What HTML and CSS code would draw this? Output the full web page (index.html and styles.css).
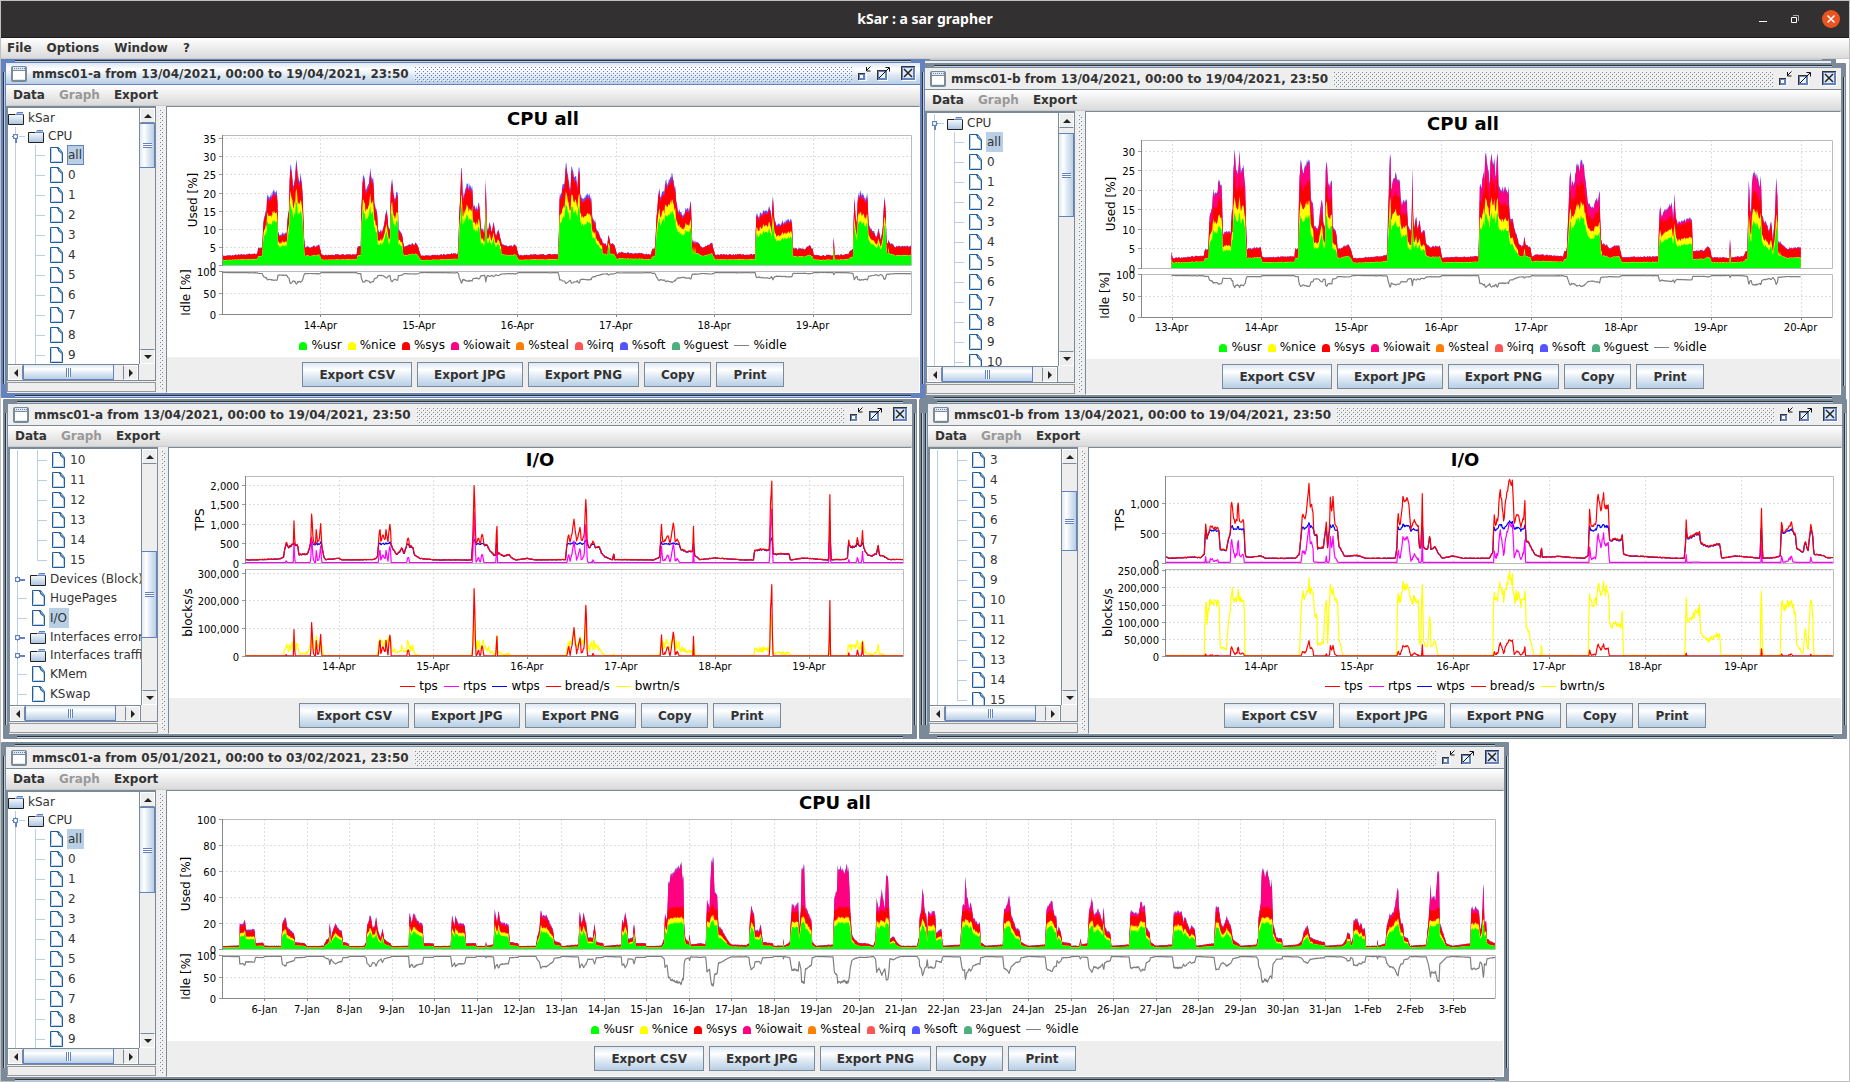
FILE: index.html
```html
<!DOCTYPE html>
<html lang="en">
<head>
<meta charset="utf-8">
<title>kSar : a sar grapher</title>
<link rel="stylesheet" href="styles.css">
<script src="app.js" defer></script>
</head>
<body>
<svg class="defs" aria-hidden="true">
  <defs>
    <linearGradient id="steel" x1="0" y1="0" x2="0" y2="1"><stop offset="0" stop-color="#fff"/><stop offset="1" stop-color="#a9c3df"/></linearGradient>
    <symbol id="folder" viewBox="0 0 16 14"><path d="M9 1h6v2H8z" fill="#6382bf"/><path d="M.5 3.5h7l1-1h7v11H.5z" fill="url(#steel)"/><path d="M.5 13.5V3.5h7M15.5 3v10.5H.5" fill="none" stroke="#222"/><path d="M8 3.5h8" stroke="#6382bf"/></symbol>
    <symbol id="doc" viewBox="0 0 16 16"><path d="M2.5.5h8l4 5v10h-12z" fill="#fff" stroke="#1f5c99"/><path d="M3.5 14.5h10V6" fill="none" stroke="#b8cfe5"/><path d="M3.5 1.5v12" stroke="#b8cfe5"/><path d="M8.5.5l6 6.5M10.5 1v3l3 2" fill="none" stroke="#2f6ba8"/></symbol>
    <symbol id="frame" viewBox="0 0 16 16"><rect x="1" y="1" width="14" height="14" rx="1" fill="#fff" stroke="#7a8a99" stroke-width="2"/><rect x="2" y="1" width="12" height="3" fill="#dde8f3"/><path d="M3 2.5h11" stroke="#6382bf" stroke-dasharray="1 1"/><path d="M2 4.5h12" stroke="#7a8a99"/><path d="M3 13.5h11" stroke="#dde8f3"/></symbol>
    <symbol id="min" viewBox="0 0 15 15"><path d="M2 14.5h7.500V8" fill="none" stroke="#fff"/><rect x="1" y="7" width="7" height="7" fill="#333"/><rect x="2" y="8" width="6" height="6" fill="#6382bf"/><rect x="3" y="9" width="3" height="3" fill="#fff"/><path d="M13.5.5l-4 4M9.500 1v4h4" fill="none" stroke="#111"/></symbol>
    <symbol id="max" viewBox="0 0 15 15"><path d="M2 14.5h9.500V6" fill="none" stroke="#fff"/><rect x="1" y="4" width="10" height="10" fill="#333"/><rect x="2" y="5" width="9" height="9" fill="#6382bf"/><rect x="3" y="6" width="6" height="6" fill="#eef3fa"/><path d="M3 12l10-10M9.500 1.500h4v4" fill="none" stroke="#111"/></symbol>
    <symbol id="close" viewBox="0 0 15 15"><path d="M1 14.5h13.5V1" fill="none" stroke="#fff"/><rect width="14" height="14" fill="#333"/><rect x="1" y="1" width="13" height="13" fill="#6382bf"/><rect x="2" y="2" width="10" height="10" fill="#dde8f3"/><path d="M3 3l8 8M11 3l-8 8" stroke="#222" stroke-width="1.500"/></symbol>
  </defs>
</svg>

<div class="app">
  <header class="app-title">
    <span></span>
    <h1>kSar : a sar grapher</h1>
    <div class="app-controls">
      <button aria-label="Minimize"><svg width="10" height="10"><path d="M1 7.500h8" stroke="#fff"/></svg></button>
      <button aria-label="Restore"><svg width="10" height="10"><path d="M1.500 3.500h5v5h-5z" fill="none" stroke="#fff"/><path d="M3 1.500h5.500V7" fill="none" stroke="#aaa"/></svg></button>
      <button class="quit" aria-label="Close"><svg width="18" height="18"><path d="M5.500 5.500l7 7M12.500 5.500l-7 7" stroke="#fff" stroke-width="1.500"/></svg></button>
    </div>
  </header>
  <nav class="menubar app-menu"><button>File</button><button>Options</button><button>Window</button><button>?</button></nav>

  <main class="desktop">
    <div class="window back-top"></div>
    <div class="window back-mid"></div>

    <section class="window w-cpu-b">
      <header class="titlebar"><svg class="ic"><use href="#frame"/></svg><h2>mmsc01-b from 13/04/2021, 00:00 to 19/04/2021, 23:50</h2><span class="bumps"></span><button aria-label="Iconify"><svg><use href="#min"/></svg></button><button aria-label="Maximize"><svg><use href="#max"/></svg></button><button class="shut" aria-label="Close"><svg><use href="#close"/></svg></button></header>
      <nav class="menubar"><button>Data</button><button disabled>Graph</button><button>Export</button></nav>
      <div class="split">
        <aside class="side">
          <div class="scrollpane">
            <ul class="tree">
              <li class="n1 open"><svg class="ic"><use href="#folder"/></svg><span>CPU</span></li>
              <li class="n2"><svg class="ic"><use href="#doc"/></svg><span class="sel">all</span></li>
              <li class="n2"><svg class="ic"><use href="#doc"/></svg><span>0</span></li>
              <li class="n2"><svg class="ic"><use href="#doc"/></svg><span>1</span></li>
              <li class="n2"><svg class="ic"><use href="#doc"/></svg><span>2</span></li>
              <li class="n2"><svg class="ic"><use href="#doc"/></svg><span>3</span></li>
              <li class="n2"><svg class="ic"><use href="#doc"/></svg><span>4</span></li>
              <li class="n2"><svg class="ic"><use href="#doc"/></svg><span>5</span></li>
              <li class="n2"><svg class="ic"><use href="#doc"/></svg><span>6</span></li>
              <li class="n2"><svg class="ic"><use href="#doc"/></svg><span>7</span></li>
              <li class="n2"><svg class="ic"><use href="#doc"/></svg><span>8</span></li>
              <li class="n2"><svg class="ic"><use href="#doc"/></svg><span>9</span></li>
              <li class="n2"><svg class="ic"><use href="#doc"/></svg><span>10</span></li>
            </ul>
            <div class="vbar"><button class="up" aria-label="Scroll up"></button><div class="track"><i class="thumb" style="margin-top:5px;height:84px"></i></div><button class="down" aria-label="Scroll down"></button></div>
            <div class="hbar"><button class="left" aria-label="Scroll left"></button><div class="track"><i class="thumb"></i></div><button class="right" aria-label="Scroll right"></button></div>
          </div>
          <div class="status"></div>
        </aside>
        <div class="divider"></div>
        <div class="report">
          <h3>CPU all</h3>
          <div class="plot" data-chart="cpuB"></div>
          <ul class="legend"><li class="usr">%usr</li><li class="nice">%nice</li><li class="sys">%sys</li><li class="iowait">%iowait</li><li class="steal">%steal</li><li class="irq">%irq</li><li class="soft">%soft</li><li class="guest">%guest</li><li class="line idle">%idle</li></ul>
          <div class="actions"><button>Export CSV</button><button>Export JPG</button><button>Export PNG</button><button>Copy</button><button>Print</button></div>
        </div>
      </div>
    </section>

    <section class="window w-io-a">
      <header class="titlebar"><svg class="ic"><use href="#frame"/></svg><h2>mmsc01-a from 13/04/2021, 00:00 to 19/04/2021, 23:50</h2><span class="bumps"></span><button aria-label="Iconify"><svg><use href="#min"/></svg></button><button aria-label="Maximize"><svg><use href="#max"/></svg></button><button class="shut" aria-label="Close"><svg><use href="#close"/></svg></button></header>
      <nav class="menubar"><button>Data</button><button disabled>Graph</button><button>Export</button></nav>
      <div class="split">
        <aside class="side">
          <div class="scrollpane">
            <ul class="tree">
              <li class="n2"><svg class="ic"><use href="#doc"/></svg><span>10</span></li>
              <li class="n2"><svg class="ic"><use href="#doc"/></svg><span>11</span></li>
              <li class="n2"><svg class="ic"><use href="#doc"/></svg><span>12</span></li>
              <li class="n2"><svg class="ic"><use href="#doc"/></svg><span>13</span></li>
              <li class="n2"><svg class="ic"><use href="#doc"/></svg><span>14</span></li>
              <li class="n2 last"><svg class="ic"><use href="#doc"/></svg><span>15</span></li>
              <li class="n1 closed"><svg class="ic"><use href="#folder"/></svg><span>Devices (Block)</span></li>
              <li class="n1 leaf"><svg class="ic"><use href="#doc"/></svg><span>HugePages</span></li>
              <li class="n1 leaf"><svg class="ic"><use href="#doc"/></svg><span class="sel">I/O</span></li>
              <li class="n1 closed"><svg class="ic"><use href="#folder"/></svg><span>Interfaces errors</span></li>
              <li class="n1 closed"><svg class="ic"><use href="#folder"/></svg><span>Interfaces traffic</span></li>
              <li class="n1 leaf"><svg class="ic"><use href="#doc"/></svg><span>KMem</span></li>
              <li class="n1 leaf"><svg class="ic"><use href="#doc"/></svg><span>KSwap</span></li>
              <li class="n1 leaf"><svg class="ic"><use href="#doc"/></svg><span></span></li>
            </ul>
            <div class="vbar"><button class="up" aria-label="Scroll up"></button><div class="track"><i class="thumb" style="margin-top:87px;height:87px"></i></div><button class="down" aria-label="Scroll down"></button></div>
            <div class="hbar"><button class="left" aria-label="Scroll left"></button><div class="track"><i class="thumb"></i></div><button class="right" aria-label="Scroll right"></button></div>
          </div>
          <div class="status"></div>
        </aside>
        <div class="divider"></div>
        <div class="report">
          <h3>I/O</h3>
          <div class="plot" data-chart="ioA"></div>
          <ul class="legend"><li class="line tps">tps</li><li class="line rtps">rtps</li><li class="line wtps">wtps</li><li class="line tps">bread/s</li><li class="line bwrtn">bwrtn/s</li></ul>
          <div class="actions"><button>Export CSV</button><button>Export JPG</button><button>Export PNG</button><button>Copy</button><button>Print</button></div>
        </div>
      </div>
    </section>

    <section class="window w-io-b">
      <header class="titlebar"><svg class="ic"><use href="#frame"/></svg><h2>mmsc01-b from 13/04/2021, 00:00 to 19/04/2021, 23:50</h2><span class="bumps"></span><button aria-label="Iconify"><svg><use href="#min"/></svg></button><button aria-label="Maximize"><svg><use href="#max"/></svg></button><button class="shut" aria-label="Close"><svg><use href="#close"/></svg></button></header>
      <nav class="menubar"><button>Data</button><button disabled>Graph</button><button>Export</button></nav>
      <div class="split">
        <aside class="side">
          <div class="scrollpane">
            <ul class="tree">
              <li class="n2"><svg class="ic"><use href="#doc"/></svg><span>3</span></li>
              <li class="n2"><svg class="ic"><use href="#doc"/></svg><span>4</span></li>
              <li class="n2"><svg class="ic"><use href="#doc"/></svg><span>5</span></li>
              <li class="n2"><svg class="ic"><use href="#doc"/></svg><span>6</span></li>
              <li class="n2"><svg class="ic"><use href="#doc"/></svg><span>7</span></li>
              <li class="n2"><svg class="ic"><use href="#doc"/></svg><span>8</span></li>
              <li class="n2"><svg class="ic"><use href="#doc"/></svg><span>9</span></li>
              <li class="n2"><svg class="ic"><use href="#doc"/></svg><span>10</span></li>
              <li class="n2"><svg class="ic"><use href="#doc"/></svg><span>11</span></li>
              <li class="n2"><svg class="ic"><use href="#doc"/></svg><span>12</span></li>
              <li class="n2"><svg class="ic"><use href="#doc"/></svg><span>13</span></li>
              <li class="n2"><svg class="ic"><use href="#doc"/></svg><span>14</span></li>
              <li class="n2 last"><svg class="ic"><use href="#doc"/></svg><span>15</span></li>
            </ul>
            <div class="vbar"><button class="up" aria-label="Scroll up"></button><div class="track"><i class="thumb" style="margin-top:27px;height:60px"></i></div><button class="down" aria-label="Scroll down"></button></div>
            <div class="hbar"><button class="left" aria-label="Scroll left"></button><div class="track"><i class="thumb"></i></div><button class="right" aria-label="Scroll right"></button></div>
          </div>
          <div class="status"></div>
        </aside>
        <div class="divider"></div>
        <div class="report">
          <h3>I/O</h3>
          <div class="plot" data-chart="ioB"></div>
          <ul class="legend"><li class="line tps">tps</li><li class="line rtps">rtps</li><li class="line wtps">wtps</li><li class="line tps">bread/s</li><li class="line bwrtn">bwrtn/s</li></ul>
          <div class="actions"><button>Export CSV</button><button>Export JPG</button><button>Export PNG</button><button>Copy</button><button>Print</button></div>
        </div>
      </div>
    </section>

    <section class="window w-month">
      <header class="titlebar"><svg class="ic"><use href="#frame"/></svg><h2>mmsc01-a from 05/01/2021, 00:00 to 03/02/2021, 23:50</h2><span class="bumps"></span><button aria-label="Iconify"><svg><use href="#min"/></svg></button><button aria-label="Maximize"><svg><use href="#max"/></svg></button><button class="shut" aria-label="Close"><svg><use href="#close"/></svg></button></header>
      <nav class="menubar"><button>Data</button><button disabled>Graph</button><button>Export</button></nav>
      <div class="split">
        <aside class="side">
          <div class="scrollpane">
            <ul class="tree">
              <li class="n0"><svg class="ic"><use href="#folder"/></svg><span>kSar</span></li>
              <li class="n1 open"><svg class="ic"><use href="#folder"/></svg><span>CPU</span></li>
              <li class="n2"><svg class="ic"><use href="#doc"/></svg><span class="sel">all</span></li>
              <li class="n2"><svg class="ic"><use href="#doc"/></svg><span>0</span></li>
              <li class="n2"><svg class="ic"><use href="#doc"/></svg><span>1</span></li>
              <li class="n2"><svg class="ic"><use href="#doc"/></svg><span>2</span></li>
              <li class="n2"><svg class="ic"><use href="#doc"/></svg><span>3</span></li>
              <li class="n2"><svg class="ic"><use href="#doc"/></svg><span>4</span></li>
              <li class="n2"><svg class="ic"><use href="#doc"/></svg><span>5</span></li>
              <li class="n2"><svg class="ic"><use href="#doc"/></svg><span>6</span></li>
              <li class="n2"><svg class="ic"><use href="#doc"/></svg><span>7</span></li>
              <li class="n2"><svg class="ic"><use href="#doc"/></svg><span>8</span></li>
              <li class="n2"><svg class="ic"><use href="#doc"/></svg><span>9</span></li>
            </ul>
            <div class="vbar"><button class="up" aria-label="Scroll up"></button><div class="track"><i class="thumb" style="height:86px"></i></div><button class="down" aria-label="Scroll down"></button></div>
            <div class="hbar"><button class="left" aria-label="Scroll left"></button><div class="track"><i class="thumb"></i></div><button class="right" aria-label="Scroll right"></button></div>
          </div>
          <div class="status"></div>
        </aside>
        <div class="divider"></div>
        <div class="report">
          <h3>CPU all</h3>
          <div class="plot" data-chart="month"></div>
          <ul class="legend"><li class="usr">%usr</li><li class="nice">%nice</li><li class="sys">%sys</li><li class="iowait">%iowait</li><li class="steal">%steal</li><li class="irq">%irq</li><li class="soft">%soft</li><li class="guest">%guest</li><li class="line idle">%idle</li></ul>
          <div class="actions"><button>Export CSV</button><button>Export JPG</button><button>Export PNG</button><button>Copy</button><button>Print</button></div>
        </div>
      </div>
    </section>

    <section class="window active w-cpu-a">
      <header class="titlebar"><svg class="ic"><use href="#frame"/></svg><h2>mmsc01-a from 13/04/2021, 00:00 to 19/04/2021, 23:50</h2><span class="bumps"></span><button aria-label="Iconify"><svg><use href="#min"/></svg></button><button aria-label="Maximize"><svg><use href="#max"/></svg></button><button class="shut" aria-label="Close"><svg><use href="#close"/></svg></button></header>
      <nav class="menubar"><button>Data</button><button disabled>Graph</button><button>Export</button></nav>
      <div class="split">
        <aside class="side">
          <div class="scrollpane">
            <ul class="tree">
              <li class="n0"><svg class="ic"><use href="#folder"/></svg><span>kSar</span></li>
              <li class="n1 open"><svg class="ic"><use href="#folder"/></svg><span>CPU</span></li>
              <li class="n2"><svg class="ic"><use href="#doc"/></svg><span class="sel focus">all</span></li>
              <li class="n2"><svg class="ic"><use href="#doc"/></svg><span>0</span></li>
              <li class="n2"><svg class="ic"><use href="#doc"/></svg><span>1</span></li>
              <li class="n2"><svg class="ic"><use href="#doc"/></svg><span>2</span></li>
              <li class="n2"><svg class="ic"><use href="#doc"/></svg><span>3</span></li>
              <li class="n2"><svg class="ic"><use href="#doc"/></svg><span>4</span></li>
              <li class="n2"><svg class="ic"><use href="#doc"/></svg><span>5</span></li>
              <li class="n2"><svg class="ic"><use href="#doc"/></svg><span>6</span></li>
              <li class="n2"><svg class="ic"><use href="#doc"/></svg><span>7</span></li>
              <li class="n2"><svg class="ic"><use href="#doc"/></svg><span>8</span></li>
              <li class="n2"><svg class="ic"><use href="#doc"/></svg><span>9</span></li>
            </ul>
            <div class="vbar"><button class="up" aria-label="Scroll up"></button><div class="track"><i class="thumb" style="height:45px"></i></div><button class="down" aria-label="Scroll down"></button></div>
            <div class="hbar"><button class="left" aria-label="Scroll left"></button><div class="track"><i class="thumb"></i></div><button class="right" aria-label="Scroll right"></button></div>
          </div>
          <div class="status"></div>
        </aside>
        <div class="divider"></div>
        <div class="report">
          <h3>CPU all</h3>
          <div class="plot" data-chart="cpuA"></div>
          <ul class="legend"><li class="usr">%usr</li><li class="nice">%nice</li><li class="sys">%sys</li><li class="iowait">%iowait</li><li class="steal">%steal</li><li class="irq">%irq</li><li class="soft">%soft</li><li class="guest">%guest</li><li class="line idle">%idle</li></ul>
          <div class="actions"><button>Export CSV</button><button>Export JPG</button><button>Export PNG</button><button>Copy</button><button>Print</button></div>
        </div>
      </div>
    </section>
  </main>
</div>
</body>
</html>
```
FILE: styles.css
```css
:root {
  --steel: #7a8a99;
  --blue: #6382bf;
  --pale: #b8cfe5;
  --ink: #333;
  --panel: #eee;
}
* { box-sizing: border-box; }
body {
  margin: 0;
  height: 100vh;
  background: #fff;
  color: var(--ink);
  font: 12px/16px "DejaVu Sans", sans-serif;
}
h1, h2, h3, ul { margin: 0; padding: 0; font-size: 12px; }
ul { list-style: none; }
button { margin: 0; padding: 0; border: 0; background: none; color: inherit; font: inherit; }
.defs { position: absolute; width: 0; height: 0; }

.app { display: flex; flex-direction: column; height: 100vh; border: 1px solid #c0c0c0; }
.app-title {
  display: grid;
  grid-template-columns: 1fr auto 1fr;
  align-items: center;
  height: 37px;
  flex: none;
  background: #323030;
  border-bottom: 1px solid #1c1a1a;
  color: #fff;
}
.app-title h1 { font: bold 14px/20px "Noto Sans", sans-serif; }
.app-controls { display: flex; justify-content: flex-end; align-items: center; gap: 22px; padding-right: 9px; }
.app-controls button { display: flex; }
.app-controls .quit { width: 18px; height: 18px; border-radius: 50%; background: #e95420; }

.menubar {
  display: flex;
  gap: 14px;
  flex: none;
  height: 21px;
  padding: 0 7px;
  background: linear-gradient(#fff, #dadada);
  border-bottom: 1px solid #ccc;
  font-weight: bold;
}
.menubar button:disabled { color: #999; }
.app-menu { gap: 15px; padding: 0 6px; }

.desktop { position: relative; flex: 1; overflow: hidden; background: #fff; }

.window {
  --edge: var(--steel);
  position: absolute;
  display: flex;
  flex-direction: column;
  padding: 5px;
  border-radius: 1px;
  background:
    linear-gradient(var(--ink), var(--ink)) left 14px top 2px / calc(100% - 28px) 1px no-repeat,
    linear-gradient(var(--pale), var(--pale)) left 14px top 3px / calc(100% - 28px) 1px no-repeat,
    linear-gradient(var(--ink), var(--ink)) left 14px bottom 2px / calc(100% - 28px) 1px no-repeat,
    linear-gradient(var(--pale), var(--pale)) left 14px bottom 1px / calc(100% - 28px) 1px no-repeat,
    linear-gradient(var(--ink), var(--ink)) left 2px top 14px / 1px calc(100% - 28px) no-repeat,
    linear-gradient(var(--pale), var(--pale)) left 3px top 14px / 1px calc(100% - 28px) no-repeat,
    linear-gradient(var(--ink), var(--ink)) right 2px top 14px / 1px calc(100% - 28px) no-repeat,
    linear-gradient(var(--pale), var(--pale)) right 1px top 14px / 1px calc(100% - 28px) no-repeat,
    linear-gradient(var(--panel), var(--panel)) content-box no-repeat,
    var(--edge);
}
.window.active { --edge: var(--blue); }
.w-cpu-a { left: 0; top: -1px; width: 924px; height: 340px; }
.w-cpu-b { left: 919px; top: 4px; width: 926px; height: 337px; }
.w-io-a { left: 2px; top: 340px; width: 914px; height: 340px; }
.w-io-b { left: 922px; top: 340px; width: 924px; height: 340px; }
.w-month { left: 0; top: 683px; width: 1508px; height: 340px; }
.back-top { left: 915px; top: -3px; width: 920px; height: 340px; }
.back-mid { left: 918px; top: 340px; width: 924px; height: 340px; }

.titlebar {
  display: flex;
  align-items: center;
  flex: none;
  height: 22px;
  padding: 0 4px 0 5px;
  border-bottom: 1px solid var(--edge);
}
.active .titlebar { background: linear-gradient(#dde8f3, #fff 30%, #dde8f3 60%, var(--pale)); }
.titlebar h2 { padding: 0 5px; font-weight: bold; white-space: nowrap; }
.titlebar button, .titlebar button svg { display: block; width: 15px; height: 15px; }
.titlebar button { margin-left: 4px; }
.titlebar .shut { margin-left: 10px; }
.bumps, .divider { background: url("data:image/svg+xml,%3Csvg xmlns='http://www.w3.org/2000/svg' width='4' height='4'%3E%3Cpath fill='%23fff' d='M0 0h1v1H0zM2 2h1v1H2z'/%3E%3Cpath fill='%237a8a99' d='M1 1h1v1H1zM3 3h1v1H3z'/%3E%3C/svg%3E"); }
.active .bumps { background-image: url("data:image/svg+xml,%3Csvg xmlns='http://www.w3.org/2000/svg' width='4' height='4'%3E%3Cpath fill='%23fff' d='M0 0h1v1H0zM2 2h1v1H2z'/%3E%3Cpath fill='%236382bf' d='M1 1h1v1H1zM3 3h1v1H3z'/%3E%3C/svg%3E"); }
.bumps { flex: 1; height: 16px; margin-right: 1px; }
.ic { flex: none; width: 16px; height: 16px; }

.split { display: flex; flex: 1; min-height: 0; }
.side {
  display: flex;
  flex-direction: column;
  gap: 1px;
  width: 150px;
  padding-bottom: 1px;
  border-top: 1px solid var(--steel);
  border-left: 1px solid var(--steel);
}
.scrollpane {
  display: grid;
  grid-template: minmax(0, 1fr) 16px / minmax(0, 1fr) 16px;
  flex: 1;
  min-height: 0;
  border: 1px solid var(--steel);
}
.status { height: 10px; border: 1px solid #999; }
.divider { width: 10px; border: 3px solid var(--panel); background-clip: padding-box; }

.tree { overflow: hidden; padding-top: 1px; background: #fff; }
.tree li {
  --v: linear-gradient(var(--pale), var(--pale));
  display: flex;
  align-items: center;
  height: 20px;
  white-space: nowrap;
  background: var(--v) 7px 0 / 1px 100% no-repeat;
}
.tree li span { margin-left: 3px; padding: 0 2px 0 1px; line-height: 20px; }
.tree .sel { background: var(--pale); }
.tree .focus { outline: 1px solid var(--blue); outline-offset: -1px; }
.tree .n0 { height: 18px; background: none; }
.tree .n0 .ic, .tree .open .ic, .tree .closed .ic { height: 14px; }
.tree .n1 { padding-left: 20px; }
.tree .open, .tree .closed {
  height: 18px;
  background:
    radial-gradient(circle, #fff 1px, var(--blue) 2px, var(--blue) 3px, transparent 3px) 4px 6px / 7px 7px no-repeat,
    linear-gradient(var(--blue), var(--blue)) 7px 12px / 2px 4px no-repeat,
    var(--v) 11px 9px / 6px 1px no-repeat,
    var(--v) 7px 0 / 1px 100% no-repeat;
}
.tree .closed {
  background:
    radial-gradient(circle, #fff 1px, var(--blue) 2px, var(--blue) 3px, transparent 3px) 4px 6px / 7px 7px no-repeat,
    linear-gradient(var(--blue), var(--blue)) 10px 9px / 5px 2px no-repeat,
    var(--v) 7px 0 / 1px 100% no-repeat;
}
.tree .leaf { background: var(--v) 7px 0 / 1px 100% no-repeat, var(--v) 8px 10px / 9px 1px no-repeat; }
.tree .n2 {
  padding-left: 40px;
  background:
    var(--v) 7px 0 / 1px 100% no-repeat,
    var(--v) 27px 0 / 1px 100% no-repeat,
    var(--v) 28px 10px / 9px 1px no-repeat;
}
.tree .last {
  background:
    var(--v) 7px 0 / 1px 100% no-repeat,
    var(--v) 27px 0 / 1px 10px no-repeat,
    var(--v) 27px 10px / 10px 1px no-repeat;
}

.vbar, .hbar { display: flex; background: var(--panel); }
.vbar { flex-direction: column; border-left: 1px solid var(--steel); }
.hbar { border-top: 1px solid var(--steel); border-right: 1px solid var(--steel); }
.vbar button, .hbar button { display: flex; align-items: center; justify-content: center; flex: none; background: var(--panel); border: 1px solid #fff; }
.vbar button { height: 15px; }
.hbar button { width: 15px; }
.vbar .up { border-bottom-color: var(--steel); }
.vbar .down { border-top-color: var(--steel); }
.hbar .left { border-right-color: var(--steel); }
.hbar .right { border-left-color: var(--steel); }
.vbar button::before, .hbar button::before { content: ""; border: 4px solid transparent; }
.vbar .up::before { border-top-width: 0; border-bottom-color: #222; }
.vbar .down::before { border-bottom-width: 0; border-top-color: #222; }
.hbar .left::before { border-left-width: 0; border-right-color: #222; }
.hbar .right::before { border-right-width: 0; border-left-color: #222; }
.track { display: flex; flex: 1; min-width: 0; min-height: 0; }
.thumb { display: flex; align-items: center; justify-content: center; border: 1px solid var(--blue); }
.thumb::before { content: ""; }
.vbar .thumb { width: 100%; border-left: 0; background: linear-gradient(90deg, #dde8f3, #fff 30%, #dde8f3 60%, var(--pale)); }
.vbar .thumb::before { width: 9px; height: 5px; background: repeating-linear-gradient(var(--blue) 0 1px, #fff 1px 2px); }
.hbar .thumb { width: 91px; border-top: 0; background: linear-gradient(#dde8f3, #fff 30%, #dde8f3 60%, var(--pale)); }
.hbar .thumb::before { width: 5px; height: 9px; background: repeating-linear-gradient(90deg, var(--blue) 0 1px, #fff 1px 2px); }

.report {
  display: flex;
  flex-direction: column;
  flex: 1;
  min-width: 0;
  border: 1px solid #fff;
  border-top-color: var(--steel);
  border-left-color: var(--steel);
  background: #fff;
  color: #000;
}
.report h3 { height: 26px; font-size: 18px; line-height: 24px; text-align: center; }
.plot { flex: 1; min-height: 0; }
.plot svg { display: block; overflow: visible; }
.tick { font-size: 10px; }
.axis { font-size: 12px; }
.legend { display: flex; justify-content: center; gap: 6px; height: 20px; padding-bottom: 4px; line-height: 16px; }
.legend li { display: flex; align-items: center; gap: 4px; }
.legend li::before { content: ""; width: 8px; height: 8px; margin-top: 2px; border-radius: 4px 4px 0 0; background: var(--c); }
.legend .line::before { width: 15px; height: 1px; margin-top: 1px; border-radius: 0; }
.usr { --c: #0f0; }
.nice, .bwrtn { --c: #ff0; }
.sys, .tps { --c: #f00; }
.iowait { --c: #ff0080; }
.steal { --c: #ff8000; }
.irq { --c: #f55; }
.soft { --c: #55f; }
.guest { --c: #4caf7d; }
.idle { --c: #808080; }
.rtps { --c: #f0f; }
.wtps { --c: #00f; }

.actions { display: flex; justify-content: center; gap: 5px; padding: 5px; background: var(--panel); color: var(--ink); }
.actions button {
  height: 25px;
  padding: 0 16px;
  border: 1px solid var(--steel);
  background: linear-gradient(#dde8f3, #fff 30%, #dde8f3 60%, var(--pale));
  font-weight: bold;
}
```
FILE: app.js
```js
// Measurements as [day, value, day, value, ...]; a day is one unit of time.
const cpuWeek = [0,5,.01,3,.36,3.7,.37,5.3,.41,5.5,.42,12,.44,14.5,.455,14.5,.46,20,.47,18.5,.51,19,.52,21,.56,20,.57,9,.58,8.5,.66,9,.67,14,.68,14,.69,26,.705,29,.72,23,.745,24,.755,30,.77,24,.79,23.5,.805,25,.82,20,.83,9,.84,5.5,.9,5.5,.99,6,1.01,3.2,
1.37,3.5,1.375,5.5,1.41,5.5,1.42,20,1.435,25,1.46,21.5,1.5,24.5,1.51,26,1.54,23.5,1.55,16,1.575,15,1.58,10,1.63,9,1.66,14,1.675,16.5,1.69,10,1.71,10,1.715,22,1.73,24.5,1.75,19,1.785,19.5,1.79,9.5,1.83,8.5,1.85,5.5,1.97,6.5,2,5,2.02,3,
2.4,3.7,2.41,14,2.435,29,2.445,18,2.46,20,2.49,22,2.545,21,2.55,15.5,2.62,16.5,2.63,10,2.67,9,2.68,25,2.69,11,2.705,9.5,2.72,13,2.74,9,2.76,12,2.78,8,2.81,9.5,2.83,7,2.86,6,2.99,6,3.01,3.2,
3.41,3.5,3.42,4,3.43,20,3.45,19.5,3.47,23,3.48,22,3.495,28.5,3.52,25,3.54,19,3.55,28,3.58,25,3.59,26,3.61,22,3.63,29,3.64,19,3.75,19,3.76,12.5,3.79,12,3.82,9,3.87,6.5,3.92,6,3.925,9,3.94,6.5,3.99,6,4.01,3.5,4.05,4,
4.36,3.5,4.37,5,4.4,5,4.42,15,4.435,22,4.45,19,4.49,20,4.5,23,4.55,23,4.56,25,4.6,22,4.63,15,4.7,14,4.72,16,4.75,15.5,4.765,18,4.775,7,4.84,6.5,4.87,5.5,4.98,6.5,5.01,3.3,
5.42,3.5,5.425,13,5.435,15.5,5.45,13,5.5,15,5.57,16,5.585,12,5.595,20,5.61,13,5.62,11.5,5.74,12,5.79,13,5.8,5,5.92,5,5.97,6.2,6,5,6.01,3.2,
6.21,3.2,6.215,8,6.225,3.2,6.37,3.6,6.38,4.5,6.41,5,6.42,15,6.425,20,6.44,12,6.455,12,6.46,20,6.52,19.5,6.54,17,6.56,19.5,6.57,11,6.6,10,6.65,8,6.67,10,6.69,7,6.71,9,6.73,19.5,6.745,14,6.75,7,6.8,6.5,6.85,5.5,7,5.8];

const cpuMonth = [0,2.8,.41,3.2,.42,20,.5,19,.545,24,.56,15,.7,15,.765,16,.79,5,.97,5.5,1,3,1.4,3,1.42,20,1.5,25,1.53,17,1.7,12,1.72,6,1.95,5,2,2.8,
2.4,3,2.43,6,2.52,9,2.54,20,2.57,9,2.62,15,2.68,20,2.74,16,2.82,14,2.85,6,2.97,5,3,2.8,3.35,3,3.4,6,3.42,18,3.5,27,3.55,16,3.6,18,3.63,24,3.68,14,3.75,8,3.78,17,3.82,8,3.97,5,4,2.8,
4.4,3,4.42,29,4.47,20,4.52,28,4.6,22,4.73,19,4.75,5,4.98,5,5,2.8,5.39,3,5.42,27,5.48,18,5.5,25,5.57,20,5.72,19,5.75,5,5.98,5,6,2.8,6.21,3,6.22,6,6.24,3,6.4,4,6.43,30,6.48,20,6.52,30,6.55,22,6.6,20,6.75,19,6.78,6,6.98,5,7,2.8,
7.4,3,7.43,10,7.48,15,7.51,31,7.55,25,7.65,26,7.7,22,7.8,15,7.83,7,7.98,5,8,2.8,8.4,4,8.43,28,8.48,20,8.52,28,8.58,20,8.62,9,8.74,9,8.78,20,8.82,6,8.98,5,9,2.8,9.41,4,9.43,24,9.47,20,9.5,29,9.55,20,9.57,8,9.68,9,9.71,20,9.75,5,9.98,5,10,2.8,
10.35,3,10.42,8,10.44,27,10.49,22,10.52,50,10.6,58,10.7,60,10.78,64,10.83,66,10.86,52,10.87,60,10.89,20,10.92,8,11,6,11.02,12,11.04,4,11.3,5,11.4,4,11.43,37,11.49,33,11.53,68,11.58,69,11.61,45,11.67,40,11.7,18,11.8,14,11.9,8,12,4,
12.35,3.5,12.42,5,12.44,22,12.47,32,12.54,28,12.56,15,12.65,14,12.7,19,12.74,6,12.98,5,13,3,13.22,3,13.23,8,13.25,3,13.38,6,13.43,36,13.5,32,13.58,36,13.6,14,13.64,30,13.66,63,13.72,63,13.75,32,13.85,25,13.89,22,13.91,6,14,3,
14.4,4,14.43,38,14.49,45,14.51,62,14.57,65,14.64,58,14.72,64,14.77,60,14.8,35,14.84,12,14.9,8,15.02,5,15.2,5,15.35,3,15.4,8,15.43,38,15.48,30,15.51,36,15.55,45,15.62,30,15.65,56,15.7,54,15.74,8,15.82,10,15.9,6,16,3,
16.38,3,16.43,10,16.44,25,16.48,30,16.51,48,16.56,30,16.6,26,16.62,10,16.64,30,16.7,27,16.77,30,16.81,27,16.83,12,16.95,16,16.98,5,17,3,17.4,4,17.43,25,17.46,36,17.5,34,17.515,57,17.55,42,17.6,32,17.65,36,17.7,25,17.8,20,17.86,20,17.88,6,18,3,
18.4,4,18.43,30,18.52,36,18.55,41,18.6,26,18.7,17,18.8,14,18.83,6,19,3,19.4,4,19.43,30,19.5,35,19.57,36,19.6,28,19.66,25,19.68,12,19.72,18,19.77,13,19.8,6,20,5,20.01,3,20.2,3,20.23,8,20.26,4,20.4,5,20.43,28,20.5,40,20.55,26,20.65,30,20.7,26,20.75,20,20.78,32,20.8,18,20.85,14,20.93,13,20.96,3,
21.38,4,21.41,30,21.5,28,21.6,27,21.65,36,21.7,33,21.75,34,21.78,17,21.86,13,21.88,6,22,3,22.4,4,22.43,28,22.5,29,22.62,28,22.66,20,22.68,26,22.8,15,22.85,18,22.92,16,22.96,3,23.38,5,23.42,32,23.48,33,23.54,20,23.6,17,23.68,25,23.78,17,23.82,8,23.95,5,24,3,
24.38,4,24.42,10,24.43,25,24.48,36,24.5,58,24.53,61,24.58,56,24.65,60,24.69,48,24.74,52,24.77,20,24.85,9,24.98,8,25,3,25.35,4,25.45,7,25.5,14,25.58,18,25.65,9,25.8,7,25.98,6,26,3,26.4,4,26.5,8,26.52,13,26.58,12,26.6,5,26.65,8,26.67,22,26.75,24,26.8,18,26.85,20,26.88,15,26.93,16,26.96,3,
27.22,3,27.23,8,27.25,3,27.42,5,27.45,18,27.52,27,27.6,28,27.65,34,27.71,50,27.74,30,27.78,20,27.83,19,27.86,10,27.95,8,28,3,28.38,4,28.42,18,28.44,25,28.48,48,28.51,36,28.55,42,28.6,38,28.64,58,28.68,61,28.7,20,28.8,10,28.85,5,29,3,
29.42,5,29.44,33,29.5,30,29.55,32,29.62,30,29.65,15,29.69,20,29.73,52,29.75,20,29.79,22,29.81,8,30,5];

const tpsA = [0,100,.03,80,.33,100,.37,110,.41,150,.42,330,.44,520,.46,400,.49,460,.515,480,.52,1150,.53,480,.56,470,.575,220,.66,230,.68,330,.7,560,.71,1330,.725,560,.75,480,.755,900,.77,550,.79,560,.805,1040,.815,480,.84,150,.86,90,1,120,1.03,80,
1.37,90,1.41,160,1.42,500,1.435,950,1.445,550,1.47,740,1.49,560,1.5,870,1.52,560,1.545,1070,1.555,480,1.58,350,1.61,220,1.65,300,1.67,400,1.69,240,1.715,400,1.74,730,1.75,430,1.785,430,1.8,220,1.86,120,2.03,80,
2.41,80,2.42,450,2.44,2080,2.455,430,2.48,680,2.5,500,2.525,740,2.545,420,2.57,500,2.6,350,2.65,200,2.67,210,2.677,1330,2.687,230,2.7,260,2.75,180,2.81,220,2.84,130,2.88,80,3,120,3.1,80,
3.41,90,3.42,420,3.44,760,3.46,500,3.5,1070,3.53,550,3.565,900,3.58,540,3.61,750,3.628,1840,3.64,520,3.66,380,3.7,550,3.73,400,3.77,430,3.79,260,3.83,160,3.91,80,3.922,260,3.93,90,
4.35,80,4.41,150,4.43,960,4.445,500,4.5,700,4.52,500,4.56,1080,4.575,530,4.6,650,4.64,350,4.7,300,4.763,300,4.77,970,4.78,200,4.84,90,5,130,5.3,80,
5.41,80,5.42,330,5.5,350,5.58,330,5.59,1500,5.605,2150,5.615,240,5.65,230,5.7,250,5.79,230,5.8,80,5.94,130,6.2,80,6.21,120,6.222,1700,6.232,90,
6.38,90,6.41,140,6.42,580,6.445,400,6.5,440,6.515,700,6.53,430,6.56,470,6.57,850,6.58,400,6.62,220,6.67,180,6.72,250,6.735,450,6.75,200,6.79,180,6.85,90,7,90];

const tpsB = [0,110,.05,80,.3,100,.37,90,.41,150,.415,350,.425,690,.435,400,.46,550,.47,600,.56,580,.575,220,.64,220,.66,400,.68,500,.69,1090,.71,800,.73,680,.75,720,.76,1050,.775,680,.82,700,.835,150,.85,100,.91,100,1,120,1.05,80,
1.36,80,1.4,150,1.42,500,1.43,800,1.46,750,1.485,1000,1.5,1340,1.515,950,1.53,1000,1.545,780,1.55,500,1.585,460,1.59,250,1.65,260,1.68,680,1.695,250,1.715,600,1.72,1130,1.735,900,1.75,1080,1.77,640,1.8,560,1.81,300,1.87,110,2,130,2.1,80,
2.4,80,2.42,300,2.425,850,2.45,600,2.48,1080,2.54,1050,2.56,550,2.6,720,2.64,600,2.65,260,2.67,260,2.68,1220,2.69,260,2.74,240,2.76,480,2.77,220,2.81,280,2.85,160,2.89,80,3,120,3.1,80,
3.38,80,3.42,200,3.427,880,3.44,620,3.47,760,3.49,1280,3.51,1000,3.53,700,3.56,1200,3.59,1380,3.62,1320,3.64,650,3.67,850,3.71,600,3.74,780,3.75,1000,3.76,370,3.79,350,3.85,150,3.91,100,3.922,270,3.93,100,4.1,110,
4.37,80,4.41,130,4.425,930,4.44,580,4.49,650,4.51,1140,4.54,850,4.57,1130,4.58,880,4.62,980,4.63,380,4.68,400,4.75,380,4.765,500,4.775,150,4.85,120,5,110,5.3,80,
5.41,80,5.425,350,5.43,750,5.44,400,5.5,460,5.57,510,5.58,330,5.66,280,5.7,300,5.78,320,5.8,80,5.95,120,6.2,80,6.215,900,6.225,80,
6.35,90,6.41,120,6.425,750,6.44,480,6.5,600,6.53,680,6.55,500,6.57,480,6.58,250,6.65,180,6.67,380,6.7,200,6.73,660,6.75,450,6.76,150,6.85,130,6.9,90,7,90];

function randomizer(seed) {
  let s = seed;
  return () => { s = (s * 16807) % 2147483647; return s / 2147483647; };
}

// Evenly spaced samples of an envelope, with measurement jitter.
function sample(env, days, perDay, jitter, seed) {
  const rnd = randomizer(seed);
  const out = [];
  let i = 0;
  for (let k = 0; k <= days * perDay; k++) {
    const t = k / perDay;
    while (i < env.length - 4 && env[i + 2] <= t) i += 2;
    const f = Math.min(1, Math.max(0, (t - env[i]) / (env[i + 2] - env[i])));
    out.push([t, (env[i + 1] + f * (env[i + 3] - env[i + 1])) * (1 + jitter * (rnd() - .5))]);
  }
  return out;
}

const weekTicks = n => ['13-Apr', '14-Apr', '15-Apr', '16-Apr', '17-Apr', '18-Apr', '19-Apr', '20-Apr']
  .map((s, i) => [i, s]).slice(n);
const monthTicks = Array.from({ length: 29 }, (_, i) => [i + 1, i < 26 ? (i + 6) + '-Jan' : (i - 25) + '-Feb']);

function cpuPanels(raw, layers, max, ticks, labelX) {
  const rnd = randomizer(11);
  const total = raw.map(([t, v]) => [t, v < 7 ? v - .5 : v]);
  const stacks = total.map(([t, v]) => [t, layers(v, rnd)]);
  const pick = n => stacks.map(([t, a]) => [t, a[n]]);
  return [
    { weight: 3, max, ticks, label: 'Used [%]', labelX, fill: true,
      series: [['#5555ff', total], ['#ff0080', pick(3)], ['#ff0000', pick(2)], ['#ffff00', pick(1)], ['#00ff00', pick(0)]] },
    { weight: 1, max: 100, ticks: [0, 50, 100], label: 'Idle [%]', labelX: 23,
      series: [['#808080', total.map(([t, v]) => [t, 99 - v])]] }
  ];
}
const stackA = (v, r) => { const j = 1 + .08 * (r() - .5), u = v < 7 ? v * .5 : v * .6 * j; return [u, v < 7 ? u + .1 : u + v * .12, v < 7 ? v * .96 : v * .94, v * .96]; };
const stackB = (v, r) => { const j = 1 + .08 * (r() - .5), u = v < 7 ? v * .5 : v * .48 * j; return [u, v < 7 ? u + .1 : u + v * .13, v < 7 ? v * .95 : v * (v < 14 ? .93 : .81), v * .98]; };
const stackM = (v, r) => { const u = Math.min(v * .5, 13 + v * .12) * (1 + .08 * (r() - .5)), n = u + (v < 8 ? .1 : Math.min(v * .13, 4)); return [u, n, n + (v < 8 ? v * .42 : Math.min(v * .27, 8)), v - .6]; };

function ioPanels(tps, o) {
  const rnd = randomizer(5);
  const w = tps.map(([t, v]) => [t, v < o.knee ? v * .97 : (o.knee + (v - o.knee) * o.slope) * (.96 + .06 * rnd())]);
  const r = tps.map(([t, v], i) => [t, Math.max(12, (v - w[i][1]) * .95)]);
  const bread = r.map(([t, v]) => [t, Math.max(600, (v - 30) * o.read)]);
  const bwrtn = w.map(([t, v], i) => [t, Math.max(500 + 2500 * rnd() * rnd(),
    (v - o.base) * o.write * (1 + o.noise * (rnd() - .5)) + Math.max(0, r[i][1] - 60) * o.burst)]);
  return [
    { weight: 1, max: o.maxT, ticks: o.ticksT, label: 'TPS', labelX: 35, series: [['#0000ff', w], ['#ff00ff', r], ['#ff0000', tps]] },
    { weight: 1, max: o.maxB, ticks: o.ticksB, label: 'blocks/s', labelX: 23, series: [['#ffff00', bwrtn], ['#ff0000', bread]] }
  ];
}

const weekA = sample(cpuWeek, 7, 144, .12, 7);
const gain = [1.04, 1.1, 1.08, 1.07, 1.12, 1.02, 1.2, 1];
const weekB = sample(cpuWeek, 7, 144, .1, 19).map(([t, v]) => [t, v > 8 ? v * gain[Math.floor(t)] : v]);
const charts = {
  cpuA: { left: 55, from: 0, to: 7, xTicks: weekTicks(1).slice(0, 6),
    panels: cpuPanels(weekA, stackA, 35.9, [0, 5, 10, 15, 20, 25, 30, 35], 30) },
  cpuB: { left: 55, from: -.34, to: 7.35, xTicks: weekTicks(0),
    panels: cpuPanels(weekB, stackB, 32.8, [0, 5, 10, 15, 20, 25, 30], 29) },
  ioA: { left: 76, from: 0, to: 7, xTicks: weekTicks(1).slice(0, 6),
    panels: ioPanels(sample(tpsA, 7, 144, .12, 3), {
      knee: 480, slope: .1, read: 190, write: 110, base: 130, noise: .9, burst: 60,
      maxT: 2230, ticksT: [0, 500, 1000, 1500, 2000], maxB: 313000, ticksB: [0, 100000, 200000, 300000] }) },
  ioB: { left: 76, from: 0, to: 6.96, xTicks: weekTicks(1).slice(0, 6),
    panels: ioPanels(sample(tpsB, 7, 144, .1, 23), {
      knee: 540, slope: .18, read: 75, write: 410, base: 160, noise: .15, burst: 15,
      maxT: 1450, ticksT: [0, 500, 1000], maxB: 254000, ticksB: [0, 50000, 100000, 150000, 200000, 250000] }) },
  month: { left: 55, from: 0, to: 30, xTicks: monthTicks,
    panels: cpuPanels(sample(cpuMonth, 30, 100, .1, 31), stackM, 100, [0, 20, 40, 60, 80, 100], 23) }
};

function draw(host) {
  const c = charts[host.dataset.chart];
  const W = host.clientWidth, H = host.clientHeight;
  const x0 = c.left, x1 = W - 8, top = 2, bottom = H - 23, gap = 6;
  const X = t => x0 + (t - c.from) / (c.to - c.from) * (x1 - x0);
  const sum = c.panels.reduce((a, p) => a + p.weight, 0);
  let y = top, s = '';
  for (const p of c.panels) {
    const h = Math.round((bottom - top - gap) * p.weight / sum), y1 = y + h;
    const Y = v => y1 - v / p.max * h;
    for (const v of p.ticks) {
      const ty = Math.round(Y(v)) + .5;
      s += `<path d="M${x0} ${ty}H${x1}" stroke="#ddd" stroke-dasharray="2 2"/><path d="M${x0 - 3} ${ty}h3" stroke="#999"/>`;
      s += `<text class="tick" x="${x0 - 6}" y="${ty + 4}" text-anchor="end">${v.toLocaleString('en-US')}</text>`;
    }
    for (const [t] of c.xTicks) s += `<path d="M${Math.round(X(t)) + .5} ${y}V${y1}" stroke="#ddd" stroke-dasharray="2 2"/>`;
    for (const [color, pts] of p.series) {
      const line = pts.filter(q => q[0] <= c.to).map(([t, v]) => X(t).toFixed(1) + ' ' + Y(v).toFixed(1)).join('L');
      s += p.fill
        ? `<path d="M${X(pts[0][0])} ${y1}L${line}V${y1}Z" fill="${color}"/>`
        : `<path d="M${line}" fill="none" stroke="${color}" stroke-width="1.2" stroke-linejoin="round"/>`;
    }
    s += `<path d="M${x0} ${y + .5}H${x1 + .5}V${y1 + .5}H${x0}" fill="none" stroke="#bbb"/><path d="M${x0 + .5} ${y}V${y1 + 1}" stroke="#888"/>`;
    const cy = (y + y1) / 2;
    s += `<text class="axis" transform="translate(${p.labelX} ${cy}) rotate(-90)" text-anchor="middle">${p.label}</text>`;
    y = y1 + gap;
  }
  s += `<path d="M${x0} ${y - gap + .5}H${x1}" stroke="#888"/>`;
  for (const [t, label] of c.xTicks) {
    s += `<path d="M${Math.round(X(t)) + .5} ${y - gap}v3" stroke="#888"/>`;
    s += `<text class="tick" x="${X(t)}" y="${H - 8}" text-anchor="middle">${label}</text>`;
  }
  host.innerHTML = `<svg width="${W}" height="${H}" role="img">${s}</svg>`;
}
const drawAll = () => document.querySelectorAll('.plot').forEach(draw);
window.addEventListener('resize', drawAll);
drawAll();
```
